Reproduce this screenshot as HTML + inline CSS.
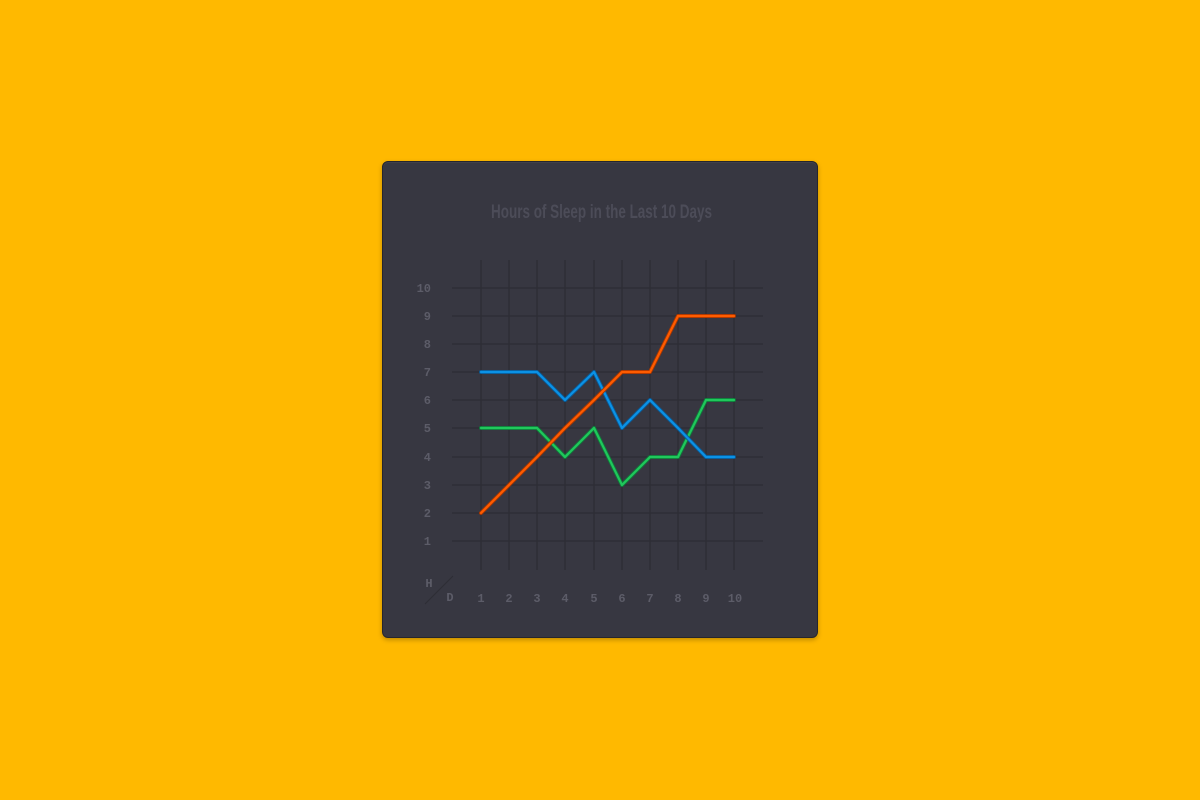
<!DOCTYPE html>
<html><head><style>
html,body{margin:0;padding:0;width:1200px;height:800px;background:#FFB900;overflow:hidden}
.card{position:absolute;left:382px;top:161px;width:434px;height:475px;background:#373741;border:1px solid #26262d;border-radius:6px;box-shadow:0 2px 5px rgba(0,0,0,.25), inset 0 1px 0 rgba(255,255,255,.05)}
svg{position:absolute;left:0;top:0}
</style></head><body>
<div class="card"></div>
<svg width="1200" height="800" xmlns="http://www.w3.org/2000/svg">
<text x="491" y="218" textLength="221" lengthAdjust="spacingAndGlyphs" font-family="Liberation Sans, sans-serif" font-weight="bold" font-size="19" fill="#4c4c58">Hours of Sleep in the Last 10 Days</text>
<g stroke="#2d2d35" stroke-width="1.3">
<line x1="481" y1="260" x2="481" y2="570"/><line x1="509" y1="260" x2="509" y2="570"/><line x1="537" y1="260" x2="537" y2="570"/><line x1="565" y1="260" x2="565" y2="570"/><line x1="594" y1="260" x2="594" y2="570"/><line x1="622" y1="260" x2="622" y2="570"/><line x1="650" y1="260" x2="650" y2="570"/><line x1="678" y1="260" x2="678" y2="570"/><line x1="706" y1="260" x2="706" y2="570"/><line x1="734" y1="260" x2="734" y2="570"/>
<line x1="452" y1="288" x2="763" y2="288"/><line x1="452" y1="316" x2="763" y2="316"/><line x1="452" y1="344" x2="763" y2="344"/><line x1="452" y1="372" x2="763" y2="372"/><line x1="452" y1="400" x2="763" y2="400"/><line x1="452" y1="428" x2="763" y2="428"/><line x1="452" y1="457" x2="763" y2="457"/><line x1="452" y1="485" x2="763" y2="485"/><line x1="452" y1="513" x2="763" y2="513"/><line x1="452" y1="541" x2="763" y2="541"/>
<line x1="425" y1="604" x2="453" y2="576" stroke-width="1"/>
</g>
<g font-family="Liberation Mono, monospace" font-weight="bold" font-size="12" fill="#5c5c68" text-anchor="end">
<text x="431" y="292">10</text><text x="431" y="320">9</text><text x="431" y="348">8</text><text x="431" y="376">7</text><text x="431" y="404">6</text><text x="431" y="432">5</text><text x="431" y="461">4</text><text x="431" y="489">3</text><text x="431" y="517">2</text><text x="431" y="545">1</text>
</g>
<g font-family="Liberation Mono, monospace" font-weight="bold" font-size="12" fill="#5c5c68" text-anchor="middle">
<text x="429" y="587">H</text><text x="450" y="601">D</text>
<text x="481" y="602">1</text><text x="509" y="602">2</text><text x="537" y="602">3</text><text x="565" y="602">4</text><text x="594" y="602">5</text><text x="622" y="602">6</text><text x="650" y="602">7</text><text x="678" y="602">8</text><text x="706" y="602">9</text><text x="735" y="602">10</text>
</g>
<g fill="none" stroke-linejoin="round" stroke-linecap="round">
<polyline points="481,428 509,428 537,428 565,457 594,428 622,485 650,457 678,457 706,400 734,400" stroke="#0f7a3a" stroke-width="4"/>
<polyline points="481,428 509,428 537,428 565,457 594,428 622,485 650,457 678,457 706,400 734,400" stroke="#20c85c" stroke-width="2.2"/>
<polyline points="481,372 509,372 537,372 565,400 594,372 622,428 650,400 678,428 706,457 734,457" stroke="#0a5a96" stroke-width="4"/>
<polyline points="481,372 509,372 537,372 565,400 594,372 622,428 650,400 678,428 706,457 734,457" stroke="#0b92e6" stroke-width="2.2"/>
<polyline points="481,513 509,485 537,457 565,428 594,400 622,372 650,372 678,316 706,316 734,316" stroke="#a83600" stroke-width="4"/>
<polyline points="481,513 509,485 537,457 565,428 594,400 622,372 650,372 678,316 706,316 734,316" stroke="#ff5c00" stroke-width="2.2"/>
</g>
</svg>
</body></html>
